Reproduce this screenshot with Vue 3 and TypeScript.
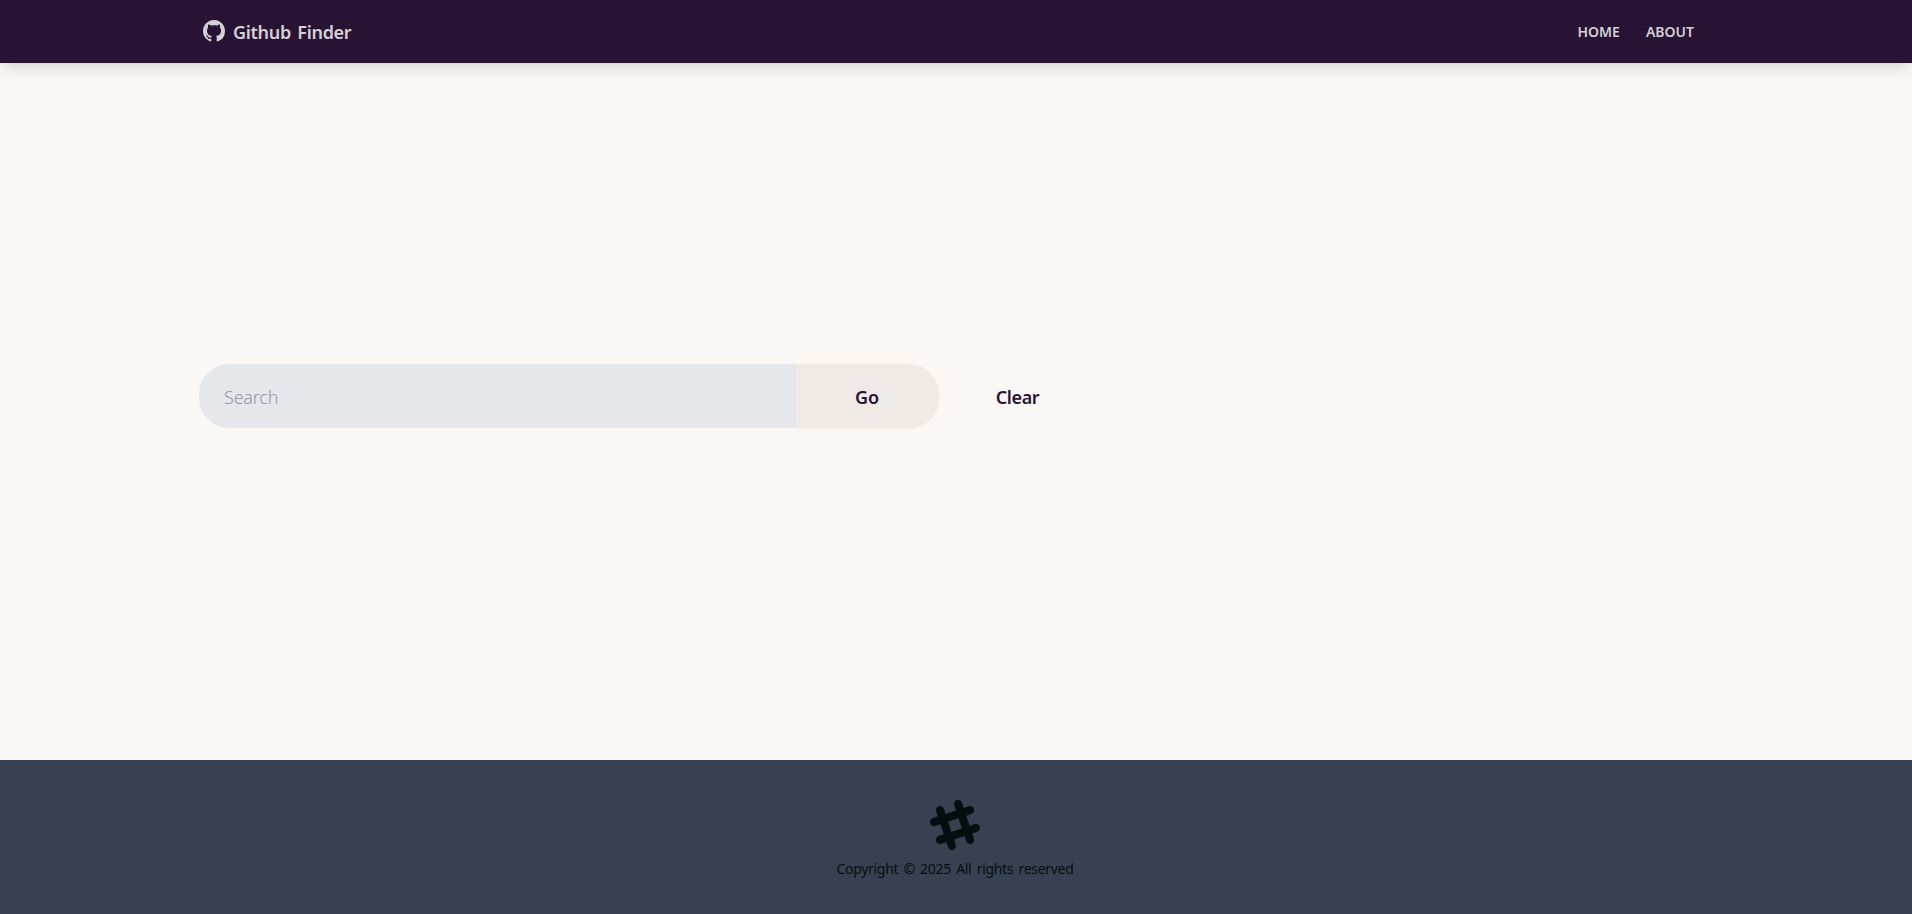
<script setup lang="ts">
import { ref } from 'vue'

const query = ref<string>('')
const links: string[] = ['HOME', 'ABOUT']
const year = 2025
</script>

<template>
  <div class="page">
    <nav class="navbar">
      <div class="container nav-inner">
        <a class="brand">
          <svg class="github" viewBox="0 0 16 16" aria-hidden="true">
            <path d="M8 0C3.58 0 0 3.58 0 8c0 3.54 2.29 6.53 5.47 7.59.4.07.55-.17.55-.38 0-.19-.01-.82-.01-1.49-2.01.37-2.53-.49-2.69-.94-.09-.23-.48-.94-.82-1.13-.28-.15-.68-.52-.01-.53.63-.01 1.08.58 1.23.82.72 1.21 1.87.87 2.33.66.07-.52.28-.87.51-1.07-1.78-.2-3.64-.89-3.64-3.95 0-.87.31-1.59.82-2.15-.08-.2-.36-1.02.08-2.12 0 0 .67-.21 2.2.82.64-.18 1.32-.27 2-.27s1.36.09 2 .27c1.53-1.04 2.2-.82 2.2-.82.44 1.1.16 1.92.08 2.12.51.56.82 1.27.82 2.15 0 3.07-1.87 3.75-3.65 3.95.29.25.54.73.54 1.48 0 1.07-.01 1.93-.01 2.2 0 .21.15.46.55.38A8.01 8.01 0 0 0 16 8c0-4.42-3.58-8-8-8z" />
          </svg>
          <span class="brand-name">Github Finder</span>
        </a>
        <div class="links">
          <a v-for="link in links" :key="link" class="link">{{ link }}</a>
        </div>
      </div>
    </nav>
    <main class="container main">
      <form class="search" @submit.prevent>
        <input v-model="query" class="field" type="text" placeholder="Search" />
        <button class="go" type="submit"><span>Go</span></button>
      </form>
      <button class="clear" type="button" @click="query = ''"><span>Clear</span></button>
    </main>
    <footer class="footer">
      <svg class="hash" viewBox="0 0 24 24" aria-hidden="true">
        <path d="M22.672 15.226l-2.432.811.841 2.515c.33 1.019-.209 2.127-1.23 2.456-1.15.325-2.148-.321-2.463-1.226l-.84-2.518-5.013 1.677.84 2.517c.391 1.203-.434 2.542-1.831 2.542-.88 0-1.601-.564-1.86-1.314l-.842-2.516-2.431.809c-1.135.328-2.145-.317-2.463-1.229-.329-1.018.211-2.127 1.231-2.456l2.432-.809-1.621-4.823-2.432.808c-1.355.384-2.558-.59-2.558-1.839 0-.817.509-1.582 1.327-1.846l2.433-.809-.842-2.515c-.33-1.02.211-2.129 1.232-2.458 1.02-.329 2.13.209 2.461 1.229l.842 2.515 5.011-1.677-.839-2.517c-.403-1.238.484-2.553 1.843-2.553.819 0 1.585.509 1.85 1.326l.841 2.517 2.431-.81c1.02-.33 2.131.211 2.461 1.229.332 1.018-.21 2.126-1.23 2.456l-2.433.809 1.622 4.823 2.433-.809c1.242-.401 2.557.484 2.557 1.838 0 .819-.51 1.583-1.328 1.847m-8.992-6.428l-5.01 1.675 1.619 4.828 5.011-1.674-1.62-4.829z" />
      </svg>
      <p class="copyright">Copyright © {{ year }} All rights reserved</p>
    </footer>
  </div>
</template>

<style>
body {
  background: #faf7f5;
}
</style>

<style scoped>
.page {
  box-sizing: border-box;
  display: flex;
  flex-direction: column;
  height: 100vh;
  overflow: hidden;
  background: #faf7f5;
  color: #291334;
  font-family: "Malgun Gothic", "Noto Sans", "Open Sans", sans-serif;
}
.container {
  box-sizing: border-box;
  width: 1514px;
  margin: 0 auto;
}
.navbar {
  flex: none;
  height: 63px;
  background: #291334;
  color: #d4d0d6;
  box-shadow: 0 10px 15px -3px rgba(0, 0, 0, 0.1), 0 4px 6px -4px rgba(0, 0, 0, 0.1);
}
.nav-inner {
  display: flex;
  align-items: center;
  justify-content: space-between;
  height: 100%;
  padding: 0 19px 0 4px;
}
.brand {
  display: flex;
  align-items: center;
  gap: 8px;
  padding-bottom: 2px;
}
.github {
  width: 22px;
  height: 22px;
  fill: currentColor;
}
.brand-name {
  padding-top: 2px;
  font-size: 18px;
  font-weight: 600;
  line-height: 28px;
  letter-spacing: -0.3px;
  word-spacing: 2px;
}
.links {
  display: flex;
  gap: 26px;
  padding-top: 1px;
}
.link {
  font-size: 14px;
  font-weight: 600;
  line-height: 20px;
}
.main {
  display: flex;
  align-items: flex-start;
  flex: 1;
  padding-top: 301px;
}
.search {
  display: flex;
  width: 740px;
  height: 64px;
}
.field {
  box-sizing: border-box;
  flex: 1;
  min-width: 0;
  height: 64px;
  padding: 2px 26px 0 25px;
  border: 0;
  border-radius: 30.4px 0 0 30.4px;
  outline: 0;
  background: #e5e7eb;
  color: #1f2937;
  font: 300 18px/28px "Malgun Gothic", "Noto Sans", sans-serif;
  letter-spacing: -0.2px;
}
.field::placeholder {
  color: #9299a8;
  opacity: 1;
}
.go,
.clear {
  height: 64px;
  padding: 1px 0 0;
  border: 0;
  background: transparent;
  color: #291334;
  font: 600 18px/26px "Malgun Gothic", "Noto Sans", sans-serif;
}
.go {
  width: 144px;
  border-radius: 0 30.4px 30.4px 0;
  background: #efeae6;
  box-shadow: 0 1px 2px rgba(0, 0, 0, 0.05);
}
.clear {
  width: 93px;
  margin-left: 32px;
  letter-spacing: -0.4px;
}
.footer {
  display: flex;
  flex: none;
  flex-direction: column;
  align-items: center;
  box-sizing: border-box;
  height: 154px;
  padding-top: 40px;
  background: #374151;
  color: #01100e;
}
.hash {
  width: 50px;
  height: 50px;
  margin-right: 2px;
  fill: currentColor;
}
.copyright {
  margin: 9px 2px 0 0;
  font-size: 14px;
  font-weight: 400;
  line-height: 20px;
  letter-spacing: -0.3px;
  word-spacing: 1.9px;
}
</style>
